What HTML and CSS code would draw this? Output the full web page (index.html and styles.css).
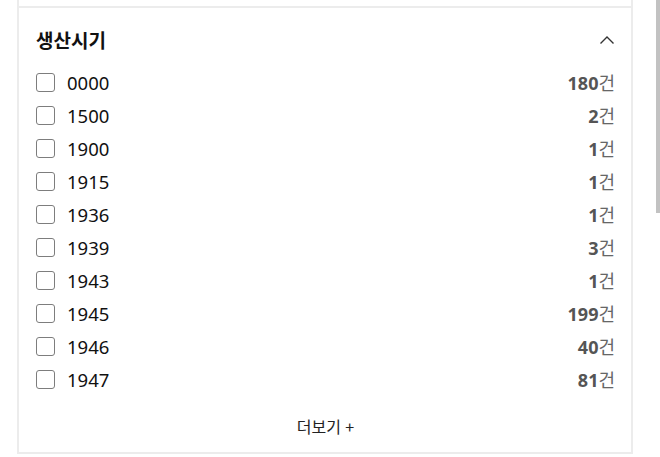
FILE: index.html
```html
<!DOCTYPE html>
<html lang="ko">
<head>
  <meta charset="UTF-8">
  <meta name="viewport" content="width=device-width, initial-scale=1.0">
  <title>생산시기</title>
  <link rel="stylesheet" href="styles.css">
</head>
<body>
  <div class="filters">
    <div class="prev-section"></div>
    <div class="filter-panel">
      <div class="filter-head">
        <h2>생산시기</h2>
        <svg class="chevron" width="16" height="10" viewBox="0 0 16 10">
          <path d="M1.5 8.5 L8 2 L14.5 8.5" fill="none" stroke="#333" stroke-width="1.4"/>
        </svg>
      </div>
      <ul class="filter-list">
        <li><label><span class="box"></span><span class="name">0000</span></label><span class="count"><b>180</b>건</span></li>
        <li><label><span class="box"></span><span class="name">1500</span></label><span class="count"><b>2</b>건</span></li>
        <li><label><span class="box"></span><span class="name">1900</span></label><span class="count"><b>1</b>건</span></li>
        <li><label><span class="box"></span><span class="name">1915</span></label><span class="count"><b>1</b>건</span></li>
        <li><label><span class="box"></span><span class="name">1936</span></label><span class="count"><b>1</b>건</span></li>
        <li><label><span class="box"></span><span class="name">1939</span></label><span class="count"><b>3</b>건</span></li>
        <li><label><span class="box"></span><span class="name">1943</span></label><span class="count"><b>1</b>건</span></li>
        <li><label><span class="box"></span><span class="name">1945</span></label><span class="count"><b>199</b>건</span></li>
        <li><label><span class="box"></span><span class="name">1946</span></label><span class="count"><b>40</b>건</span></li>
        <li><label><span class="box"></span><span class="name">1947</span></label><span class="count"><b>81</b>건</span></li>
      </ul>
      <div class="more">더보기 +</div>
    </div>
  </div>
  <div class="scroll-thumb"></div>
</body>
</html>
```

FILE: styles.css
```css
html, body {
  margin: 0;
  padding: 0;
  background: #fff;
}
body {
  font-family: "Noto Sans", "Noto Sans CJK KR", sans-serif;
  color: #111;
  height: 457px;
  overflow: hidden;
}
.filters {
  margin-left: 17px;
  width: 616px;
}
.prev-section {
  height: 6px;
  border-left: 2px solid #ececec;
  border-right: 2px solid #ececec;
}
.filter-panel {
  border: 2px solid #ececec;
  padding: 18px 16px 16px 17px;
}
.filter-head {
  display: flex;
  align-items: center;
  justify-content: space-between;
  height: 28px;
}
.filter-head h2 {
  margin: 0;
  font-family: "Noto Sans CJK KR", sans-serif;
  font-size: 19px;
  font-weight: 700;
  line-height: 28px;
  color: #111;
}
.filter-list {
  list-style: none;
  margin: 12px 0 0 0;
  padding: 0;
}
.filter-list li {
  display: flex;
  align-items: center;
  justify-content: space-between;
  height: 33px;
}
.filter-list label {
  display: flex;
  align-items: center;
  gap: 12px;
}
.box {
  width: 17px;
  height: 17px;
  border: 1.5px solid #7d7d7d;
  border-radius: 3px;
  background: #fff;
}
.name {
  font-size: 18.5px;
  line-height: 24px;
  color: #111;
}
.count {
  font-family: "Noto Sans CJK KR", sans-serif;
  font-size: 18px;
  line-height: 24px;
  color: #666;
}
.count b {
  font-family: "Noto Sans", sans-serif;
  font-weight: 700;
  color: #555;
}
.more {
  margin-top: 20px;
  text-align: center;
  font-family: "Noto Sans CJK KR", sans-serif;
  font-size: 16px;
  line-height: 20px;
  color: #222;
}
.scroll-thumb {
  position: fixed;
  top: 0;
  right: 0;
  width: 4px;
  height: 213px;
  background: #c2c2c2;
}
```
